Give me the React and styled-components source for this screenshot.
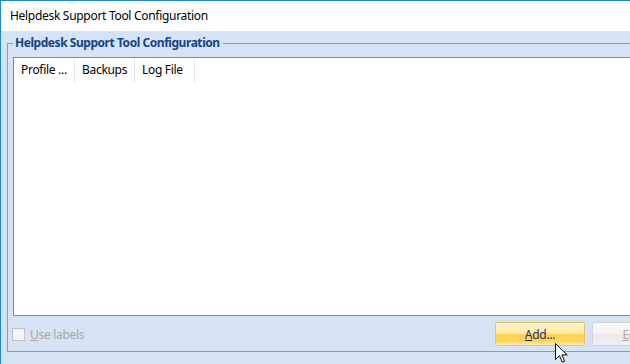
import React from "react";
import styled, { createGlobalStyle } from "styled-components";

const Global = createGlobalStyle`
  html, body { margin: 0; padding: 0; background: #ffffff; }
  body { font-family: "Noto Sans", "Open Sans", sans-serif; font-size: 12px; letter-spacing: -0.3px; }
  #root { width: 630px; height: 364px; overflow: hidden; }
`;

const Window = styled.div`
  position: relative;
  width: 630px;
  height: 364px;
  box-sizing: border-box;
  border-left: 1px solid #1a86d8;
  border-top: 1px solid #1a86d8;
  display: flex;
  flex-direction: column;
  overflow: hidden;
`;

const TitleBar = styled.div`
  height: 30px;
  flex: none;
  box-sizing: border-box;
  background: #ffffff;
  display: flex;
  align-items: center;
  padding: 0 0 2px 9px;
  color: #000000;
  font-size: 12px;
`;

const Body = styled.div`
  flex: 1;
  background: #d6e3f4;
  padding: 4px 0 0 6px;
  overflow: hidden;
`;

const Group = styled.fieldset`
  margin: 0;
  width: 640px;
  box-sizing: border-box;
  border: 1px solid #7b9bd2;
  padding: 6px 0 5px 5px;
  min-width: 0;
`;

const Legend = styled.legend`
  padding: 0 3px 0 2px;
  margin-left: 0;
  font-weight: bold;
  font-size: 12px;
  letter-spacing: -0.45px;
  line-height: 16px;
  color: #15428b;
`;

const List = styled.div`
  height: 259px;
  box-sizing: border-box;
  border: 1px solid #828790;
  background: #ffffff;
`;

const Header = styled.div`
  display: flex;
  height: 25px;
`;

const HeaderCell = styled.div`
  width: ${(p) => p.$w}px;
  box-sizing: border-box;
  border-right: 1px solid #e5e5e5;
  padding: 0 0 2px 7px;
  display: flex;
  align-items: center;
  color: #000000;
  white-space: nowrap;
`;

const Footer = styled.div`
  margin-top: 6px;
  height: 24px;
  display: flex;
  align-items: center;
`;

const CheckWrap = styled.label`
  display: flex;
  align-items: center;
  gap: 5px;
  margin-left: -1px;
  width: 483px;
  flex: none;
  color: #a6a6a6;
`;

const Box = styled.span`
  width: 13px;
  height: 13px;
  box-sizing: border-box;
  border: 1px solid #c2c2c2;
  background: #f4f4f4;
`;

const U = styled.span`
  text-decoration: underline;
`;

const Buttons = styled.div`
  display: flex;
  gap: 7px;
  flex: none;
`;

const Button = styled.div`
  width: 90px;
  height: 24px;
  box-sizing: border-box;
  border-radius: 2px;
  display: flex;
  align-items: center;
  justify-content: center;
  border: 1px solid ${(p) => (p.$active ? "#e2c36a" : "#d3d3d3")};
  background: ${(p) =>
    p.$active
      ? "linear-gradient(to bottom, #fff5cf 0%, #fee9a6 45%, #fdd459 52%, #fdd55e 82%, #ffe9a2 100%)"
      : "linear-gradient(to bottom, #fbfbfb 0%, #f1f1f1 50%, #e9e9e9 52%, #efefef 100%)"};
  color: ${(p) => (p.$active ? "#1e2c62" : "#a8a8a8")};
  flex: none;
`;

const Cursor = styled.svg`
  position: absolute;
  left: 554px;
  top: 342px;
`;

export default function App() {
  return (
    <>
      <Global />
      <Window>
        <TitleBar>Helpdesk Support Tool Configuration</TitleBar>
        <Body>
          <Group>
            <Legend>Helpdesk Support Tool Configuration</Legend>
            <List>
              <Header>
                <HeaderCell $w={61}>Profile ...</HeaderCell>
                <HeaderCell $w={60}>Backups</HeaderCell>
                <HeaderCell $w={60}>Log File</HeaderCell>
              </Header>
            </List>
            <Footer>
              <CheckWrap>
                <Box />
                <span>
                  <U>U</U>se labels
                </span>
              </CheckWrap>
              <Buttons>
                <Button $active>
                  <span>
                    <U>A</U>dd...
                  </span>
                </Button>
                <Button>
                  <span>
                    <U>E</U>dit...
                  </span>
                </Button>
              </Buttons>
            </Footer>
          </Group>
        </Body>
        <Cursor width="13" height="21" viewBox="0 0 13 21">
          <path
            d="M0.5 0.5 L0.5 16.5 L4.5 12.7 L7.3 19.2 L9.6 18.2 L6.9 11.9 L12.2 11.9 Z"
            fill="#ffffff"
            stroke="#000000"
            strokeWidth="1"
            strokeLinejoin="miter"
          />
        </Cursor>
      </Window>
    </>
  );
}
